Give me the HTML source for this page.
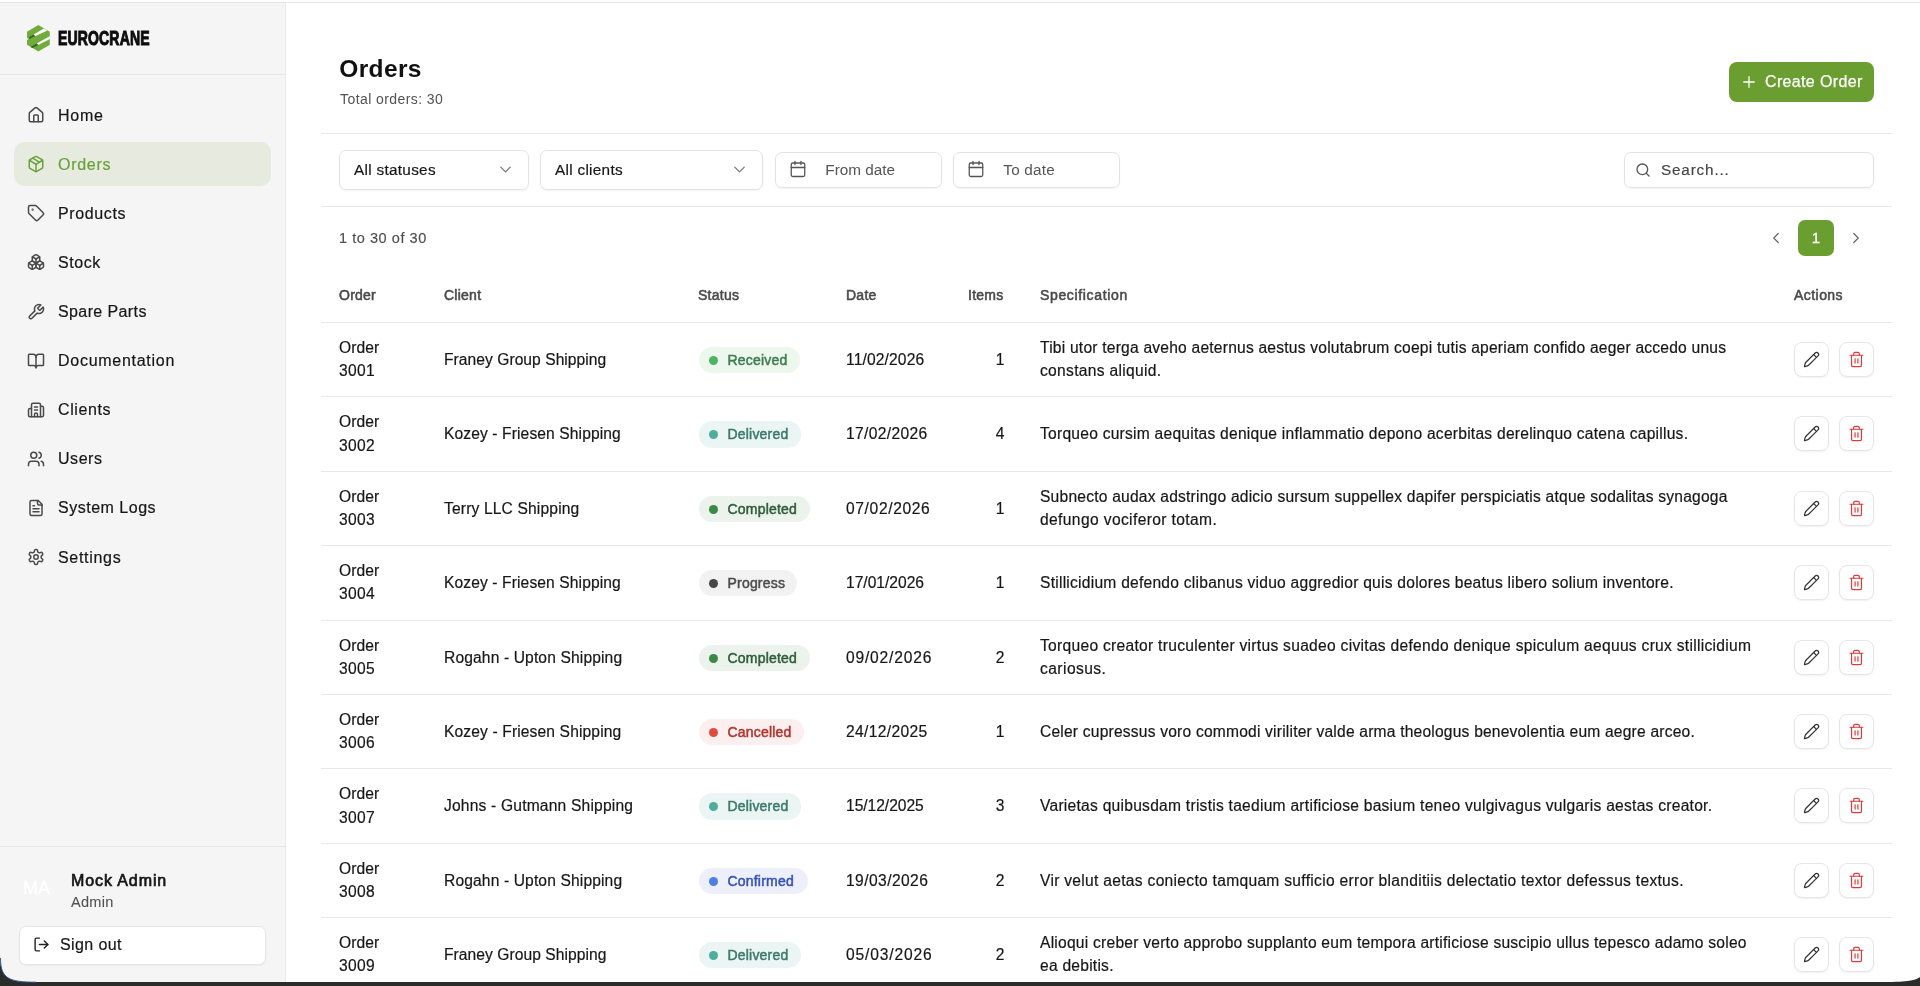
<!DOCTYPE html><html><head><meta charset="utf-8"><style>*{box-sizing:border-box;margin:0;padding:0}
html,body{width:1920px;height:986px;overflow:hidden;background:#fff;font-family:"Liberation Sans",sans-serif;color:#171717}
.abs{position:absolute}
svg.i{position:absolute;fill:none;stroke:currentColor;stroke-width:2;stroke-linecap:round;stroke-linejoin:round}
#topline{left:0;top:2px;width:1920px;height:1px;background:#e6e6e6}
#side{left:0;top:3px;width:286px;height:983px;background:#f5f5f5;border-right:1px solid #e9e9e9;will-change:transform}
#logo{position:absolute;left:27px;top:22px}
#logotxt{position:absolute;left:57.5px;top:19.5px;font-size:20.8px;font-weight:bold;color:#0d0d0d;transform:scaleX(0.675);transform-origin:0 0;-webkit-text-stroke:1.1px #0d0d0d;letter-spacing:0.2px;line-height:30px}
.nav{position:absolute;left:14px;width:257px;height:44px;border-radius:10px}
.nav .t{position:absolute;left:44px;top:0.8px;line-height:44px;font-size:16px;letter-spacing:0.55px;color:#171717;-webkit-text-stroke:0.2px currentColor}
.nav svg{left:12.8px;top:13.3px;width:18px;height:18px;color:#4a4a4a;stroke-width:2}
.nav.act{background:#e6eadf}
.nav.act .t{color:#6aa13a}
.nav.act svg{color:#6aa13a}
#avatar{left:23px;top:873px;font-size:18px;color:#fff;line-height:24px;-webkit-text-stroke:0.3px #fff}
#uname{left:71px;top:867px;font-size:16px;line-height:22px;color:#171717;letter-spacing:0.9px;-webkit-text-stroke:0.7px #171717}
#urole{left:71px;top:889px;font-size:14.5px;line-height:20px;color:#525252;letter-spacing:0.3px;-webkit-text-stroke:0.1px #525252}
#signout{left:19px;top:923px;width:247px;height:39px;background:#fff;border:1px solid #e6e6e6;border-radius:7px;box-shadow:0 1px 2px rgba(0,0,0,.05)}
#signout svg{left:13.3px;top:9.3px;width:17px;height:17px;color:#222}
#signout span{position:absolute;left:40px;top:6px;font-size:16px;line-height:24px;letter-spacing:0.4px;color:#171717;-webkit-text-stroke:0.2px #171717}
#main{left:286px;top:3px;width:1634px;height:983px;will-change:transform}
.hline{position:absolute;height:1px;background:#e8e8e8}
#title{left:53.3px;top:51px;font-size:24.5px;font-weight:bold;line-height:30px;color:#111;letter-spacing:0.35px}
#total{left:54px;top:87px;font-size:14px;line-height:18px;letter-spacing:0.42px;color:#525252}
#create{left:1443px;top:59px;width:145px;height:40px;background:#6b9e31;border-radius:8px;color:#fff}
#create svg{left:11px;top:11px;width:18px;height:18px;stroke-width:1.7}
#create span{position:absolute;left:36px;top:10px;font-size:16px;line-height:20px;letter-spacing:0.35px;-webkit-text-stroke:0.25px #fff}
.box{position:absolute;border:1px solid #e3e3e3;border-radius:7px;background:#fff;box-shadow:0 1px 2px rgba(0,0,0,.05)}
.sel span{position:absolute;left:14px;top:9px;font-size:15.3px;line-height:20px;letter-spacing:0.35px;color:#171717;-webkit-text-stroke:0.2px #171717}
.sel svg{right:13.5px;top:9.4px;width:19px;height:19px;color:#777;stroke-width:1.6}
.dt svg{left:12.7px;top:7.4px;width:18px;height:18px;color:#555;stroke-width:1.7}
.dt span{position:absolute;left:49.3px;top:7px;font-size:15.3px;line-height:20px;letter-spacing:0.25px;color:#555}
.srch svg{left:10px;top:9px;width:16px;height:16px;stroke-width:2}
.srch span{left:36px;letter-spacing:0.9px;color:#444;-webkit-text-stroke:0.15px #444}
#range{left:53px;top:226px;font-size:14.5px;line-height:18px;letter-spacing:0.55px;color:#4d4d4d;-webkit-text-stroke:0.15px #4d4d4d}
#pg{left:1512px;top:217px;width:36px;height:36px;background:#6b9e31;border-radius:7px;color:#fff}
#pg span{position:absolute;left:0;width:36px;text-align:center;top:9px;font-size:15px;line-height:18px;-webkit-text-stroke:0.3px #fff}
#pg svg{width:18px;height:18px;color:#666;stroke-width:1.6}
.cell{position:absolute;font-size:15.6px;line-height:23.3px;letter-spacing:0.5px;color:#171717;white-space:nowrap;-webkit-text-stroke:0.2px #171717}
.cell.two{top:13.0px}
.cell.one{top:25.0px}
.hd{position:absolute;font-size:14px;color:#4a4a4a;white-space:nowrap;letter-spacing:0.25px;line-height:20px;-webkit-text-stroke:0.55px #4a4a4a}
.badge{position:absolute;top:24px;height:26.3px;border-radius:13px;font-size:14px;line-height:26px;padding-left:29px;white-space:nowrap;letter-spacing:0.2px;-webkit-text-stroke:0.5px currentColor}
.badge i{position:absolute;left:10.5px;top:9px;width:9px;height:9px;border-radius:50%}
.btn{position:absolute;top:19px;width:35px;height:35px;border:1px solid #e6e6e6;border-radius:8px;background:#fff;box-shadow:0 1px 2px rgba(0,0,0,.06)}
.btn svg{left:8px;top:8px;width:17px;height:17px;stroke-width:1.7;color:#333}
.btn.del svg{color:#dc3c3c}
#bottombar{left:0;top:982px;width:1920px;height:4px;background:#2b2b2b}

#corners{position:absolute;left:0;top:0;width:1920px;height:986px;pointer-events:none}
</style></head><body>
<div id="topline" class="abs"></div>
<div id="side" class="abs">
<svg id="logo" width="30" height="33" viewBox="0 0 30 33"><g transform="translate(-3,-3)"><polygon points="14.4,3 25.8,9.7 25.8,22.8 14.4,29.5 3,22.8 3,9.7" fill="#71ab3b"/><polygon points="9.7,12.4 19.75,6.4 23.4,8.4 11,14.3" fill="#fafafa"/><polygon points="3,16.4 9.7,12.4 11,14.3 3,18.1" fill="#2c6a20"/><polygon points="3,16.4 4.6,15.45 4.6,17.35 3,18.1" fill="#f7f7f7"/><polygon points="12.7,21.4 26,14.0 26,17.0 14.1,23.1" fill="#fafafa"/><polygon points="6.5,24.9 12.7,21.4 14.1,23.1 8.44,26.0" fill="#2c6a20"/></g></svg><div id="logotxt">EUROCRANE</div>

<div class="hline" style="left:0;top:71px;width:285px;background:#e6e6e6"></div>
<div class="nav" style="top:89.9px"><svg class="i" viewBox="0 0 24 24" style=""><path d="M15 21v-8a1 1 0 0 0-1-1h-4a1 1 0 0 0-1 1v8"/><path d="M3 10a2 2 0 0 1 .709-1.528l7-5.999a2 2 0 0 1 2.582 0l7 5.999A2 2 0 0 1 21 10v9a2 2 0 0 1-2 2H5a2 2 0 0 1-2-2z"/></svg><div class="t"><span id="n0" style="letter-spacing:0.751px">Home</span></div></div>
<div class="nav act" style="top:139.0px"><svg class="i" viewBox="0 0 24 24" style=""><path d="M11 21.73a2 2 0 0 0 2 0l7-4A2 2 0 0 0 21 16V8a2 2 0 0 0-1-1.73l-7-4a2 2 0 0 0-2 0l-7 4A2 2 0 0 0 3 8v8a2 2 0 0 0 1 1.73z"/><path d="M12 22V12"/><path d="m3.3 7 7.703 4.734a2 2 0 0 0 1.994 0L20.7 7"/><path d="m7.5 4.27 9 5.15"/></svg><div class="t"><span id="n1" style="letter-spacing:0.71px">Orders</span></div></div>
<div class="nav" style="top:188.1px"><svg class="i" viewBox="0 0 24 24" style=""><path d="M12.586 2.586A2 2 0 0 0 11.172 2H4a2 2 0 0 0-2 2v7.172a2 2 0 0 0 .586 1.414l8.704 8.704a2.426 2.426 0 0 0 3.42 0l6.58-6.58a2.426 2.426 0 0 0 0-3.42z"/><circle cx="7.5" cy="7.5" r=".5" fill="currentColor"/></svg><div class="t"><span id="n2" style="letter-spacing:0.621px">Products</span></div></div>
<div class="nav" style="top:237.2px"><svg class="i" viewBox="0 0 24 24" style=""><path d="M2.97 12.92A2 2 0 0 0 2 14.63v3.24a2 2 0 0 0 .97 1.71l3 1.8a2 2 0 0 0 2.06 0L12 19v-5.5l-5-3-4.03 2.42Z"/><path d="m7 16.5-4.74-2.85"/><path d="m7 16.5 5-3"/><path d="M7 16.5v5.17"/><path d="M12 13.5V19l3.970 2.38a2 2 0 0 0 2.06 0l3-1.8a2 2 0 0 0 .97-1.71v-3.24a2 2 0 0 0-.97-1.71L17 10.5l-5 3Z"/><path d="m17 16.5-5-3"/><path d="m17 16.5 4.74-2.85"/><path d="M17 16.5v5.17"/><path d="M7.97 4.42A2 2 0 0 0 7 6.13v4.37l5 3 5-3V6.13a2 2 0 0 0-.97-1.71l-3-1.8a2 2 0 0 0-2.06 0l-3 1.8Z"/><path d="M12 8 7.26 5.15"/><path d="m12 8 4.74-2.85"/><path d="M12 13.5V8"/></svg><div class="t"><span id="n3" style="letter-spacing:0.575px">Stock</span></div></div>
<div class="nav" style="top:286.3px"><svg class="i" viewBox="0 0 24 24" style=""><path d="M14.7 6.3a1 1 0 0 0 0 1.4l1.6 1.6a1 1 0 0 0 1.4 0l3.77-3.77a6 6 0 0 1-7.940 7.940l-6.910 6.910a2.12 2.12 0 0 1-3-3l6.910-6.910a6 6 0 0 1 7.940-7.940l-3.760 3.760z"/></svg><div class="t"><span id="n4" style="letter-spacing:0.39px">Spare Parts</span></div></div>
<div class="nav" style="top:335.4px"><svg class="i" viewBox="0 0 24 24" style=""><path d="M12 7v14"/><path d="M3 18a1 1 0 0 1-1-1V4a1 1 0 0 1 1-1h5a4 4 0 0 1 4 4 4 4 0 0 1 4-4h5a1 1 0 0 1 1 1v13a1 1 0 0 1-1 1h-6a3 3 0 0 0-3 3 3 3 0 0 0-3-3z"/></svg><div class="t"><span id="n5" style="letter-spacing:0.725px">Documentation</span></div></div>
<div class="nav" style="top:384.5px"><svg class="i" viewBox="0 0 24 24" style=""><path d="M10 12h4"/><path d="M10 8h4"/><path d="M14 21v-3a2 2 0 0 0-4 0v3"/><path d="M6 10H4a2 2 0 0 0-2 2v7a2 2 0 0 0 2 2h16a2 2 0 0 0 2-2V9a2 2 0 0 0-2-2h-2"/><path d="M6 21V5a2 2 0 0 1 2-2h8a2 2 0 0 1 2 2v16"/></svg><div class="t"><span id="n6" style="letter-spacing:0.617px">Clients</span></div></div>
<div class="nav" style="top:433.6px"><svg class="i" viewBox="0 0 24 24" style=""><path d="M16 21v-2a4 4 0 0 0-4-4H6a4 4 0 0 0-4 4v2"/><circle cx="9" cy="7" r="4"/><path d="M22 21v-2a4 4 0 0 0-3-3.87"/><path d="M16 3.13a4 4 0 0 1 0 7.75"/></svg><div class="t"><span id="n7" style="letter-spacing:0.55px">Users</span></div></div>
<div class="nav" style="top:482.7px"><svg class="i" viewBox="0 0 24 24" style=""><path d="M15 2H6a2 2 0 0 0-2 2v16a2 2 0 0 0 2 2h12a2 2 0 0 0 2-2V7Z"/><path d="M14 2v4a2 2 0 0 0 2 2h4"/><path d="M10 9H8"/><path d="M16 13H8"/><path d="M16 17H8"/></svg><div class="t"><span id="n8" style="letter-spacing:0.51px">System Logs</span></div></div>
<div class="nav" style="top:531.8px"><svg class="i" viewBox="0 0 24 24" style=""><path d="M12.22 2h-.44a2 2 0 0 0-2 2v.18a2 2 0 0 1-1 1.73l-.43.25a2 2 0 0 1-2 0l-.15-.08a2 2 0 0 0-2.73.73l-.22.38a2 2 0 0 0 .73 2.730l.15.1a2 2 0 0 1 1 1.72v.51a2 2 0 0 1-1 1.74l-.15.09a2 2 0 0 0-.73 2.73l.22.38a2 2 0 0 0 2.73.73l.15-.08a2 2 0 0 1 2 0l.43.25a2 2 0 0 1 1 1.73V20a2 2 0 0 0 2 2h.44a2 2 0 0 0 2-2v-.18a2 2 0 0 1 1-1.73l.43-.25a2 2 0 0 1 2 0l.15.08a2 2 0 0 0 2.73-.73l.22-.39a2 2 0 0 0-.73-2.73l-.15-.08a2 2 0 0 1-1-1.74v-.5a2 2 0 0 1 1-1.74l.15-.09a2 2 0 0 0 .73-2.73l-.22-.38a2 2 0 0 0-2.73-.73l-.15.08a2 2 0 0 1-2 0l-.43-.25a2 2 0 0 1-1-1.73V4a2 2 0 0 0-2-2z"/><circle cx="12" cy="12" r="3"/></svg><div class="t"><span id="n9" style="letter-spacing:0.693px">Settings</span></div></div>
<div class="hline" style="left:0;top:843px;width:285px;background:#e6e6e6"></div>
<div class="abs" id="avatar">MA</div>
<div class="abs" id="uname">Mock Admin</div>
<div class="abs" id="urole">Admin</div>
<div class="abs" id="signout"><svg class="i" viewBox="0 0 24 24" style=""><path d="m16 17 5-5-5-5"/><path d="M21 12H9"/><path d="M9 21H5a2 2 0 0 1-2-2V5a2 2 0 0 1 2-2h4"/></svg><span>Sign out</span></div>
</div>
<div id="main" class="abs">
<div class="abs" id="title">Orders</div>
<div class="abs" id="total">Total orders: 30</div>
<div class="abs" id="create"><svg class="i" viewBox="0 0 24 24" style=""><path d="M5 12h14"/><path d="M12 5v14"/></svg><span>Create Order</span></div>
<div class="hline" style="left:35px;top:130px;width:1571px"></div>
<div class="box sel" style="left:53px;top:147px;width:190px;height:40px"><span id="f1" style="letter-spacing:0.305px">All statuses</span><svg class="i" viewBox="0 0 24 24" style=""><path d="m6 9 6 6 6-6"/></svg></div>
<div class="box sel" style="left:254px;top:147px;width:223px;height:40px"><span id="f2" style="letter-spacing:0.3px">All clients</span><svg class="i" viewBox="0 0 24 24" style=""><path d="m6 9 6 6 6-6"/></svg></div>
<div class="box dt" style="left:489px;top:149px;width:167px;height:36px"><svg class="i" viewBox="0 0 24 24" style=""><path d="M8 2v4"/><path d="M16 2v4"/><rect width="18" height="18" x="3" y="4" rx="2"/><path d="M3 10h18"/></svg><span id="f3" style="letter-spacing:0.014px">From date</span></div>
<div class="box dt" style="left:667px;top:149px;width:167px;height:36px"><svg class="i" viewBox="0 0 24 24" style=""><path d="M8 2v4"/><path d="M16 2v4"/><rect width="18" height="18" x="3" y="4" rx="2"/><path d="M3 10h18"/></svg><span id="f4" style="letter-spacing:0.216px">To date</span></div>
<div class="box dt srch" style="left:1338px;top:149px;width:250px;height:36px"><svg class="i" viewBox="0 0 24 24" style=""><circle cx="11" cy="11" r="8"/><path d="m21 21-4.3-4.3"/></svg><span id="f5" style="letter-spacing:0.825px">Search...</span></div>
<div class="hline" style="left:35px;top:203px;width:1571px"></div>
<div class="abs" id="range">1 to 30 of 30</div>
<div class="abs" id="pg"><svg class="i" viewBox="0 0 24 24" style="left:-30.8px;top:8.5px"><path d="m15 18-6-6 6-6"/></svg><span>1</span><svg class="i" viewBox="0 0 24 24" style="left:49.2px;top:8.5px"><path d="m9 18 6-6-6-6"/></svg></div>
<div class="hd" style="left:53px;top:282px;letter-spacing:0.25px">Order</div>
<div class="hd" style="left:158px;top:282px;letter-spacing:0.25px">Client</div>
<div class="hd" style="left:412px;top:282px;letter-spacing:0.25px">Status</div>
<div class="hd" style="left:560px;top:282px;letter-spacing:0.25px">Date</div>
<div class="hd" style="left:682px;top:282px;letter-spacing:0.25px">Items</div>
<div class="hd" style="left:754px;top:282px;letter-spacing:0.65px">Specification</div>
<div class="hd" style="left:1508px;top:282px;letter-spacing:0.45px">Actions</div>
<div class="hline" style="left:35px;top:319px;width:1571px"></div>
<div class="row abs" style="left:0;top:320.00px;width:1634px;height:73.40px">
<div class="cell two" style="left:53px"><span id="o0a" style="letter-spacing:0.1px">Order</span><br><span id="o0b" style="letter-spacing:0.368px">3001</span></div>
<div class="cell one" style="left:158px"><span id="c0" style="letter-spacing:0.05px">Franey Group Shipping</span></div>
<div class="badge" style="left:412.5px;color:#3e7c52;background:#edf7ee;width:101px"><i style="background:#4cb563"></i>Received</div>
<div class="cell one" style="left:560px"><span id="d0" style="letter-spacing:0.143px">11/02/2026</span></div>
<div class="cell one" style="left:660px;width:59px;text-align:right">1</div>
<div class="cell two" style="left:754px"><span id="s0a" style="letter-spacing:0.215px">Tibi utor terga aveho aeternus aestus volutabrum coepi tutis aperiam confido aeger accedo unus</span><br><span id="s0b" style="letter-spacing:0.303px">constans aliquid.</span></div>
<div class="btn" style="left:1508px"><svg class="i" viewBox="0 0 24 24" style=""><path d="M21.174 6.812a1 1 0 0 0-3.986-3.987L3.842 16.174a2 2 0 0 0-.5.83l-1.321 4.352a.5.5 0 0 0 .623.622l4.353-1.32a2 2 0 0 0 .83-.497z"/><path d="m15 5 4 4"/></svg></div>
<div class="btn del" style="left:1553px"><svg class="i" viewBox="0 0 24 24" style=""><path d="M3 6h18"/><path d="M19 6v14c0 1-1 2-2 2H7c-1 0-2-1-2-2V6"/><path d="M8 6V4c0-1 1-2 2-2h4c1 0 2 1 2 2v2"/><line x1="10" x2="10" y1="11" y2="17"/><line x1="14" x2="14" y1="11" y2="17"/></svg></div>
</div>
<div class="hline" style="left:35px;top:393.40px;width:1571px"></div>
<div class="row abs" style="left:0;top:394.40px;width:1634px;height:73.40px">
<div class="cell two" style="left:53px"><span id="o1a" style="letter-spacing:0.1px">Order</span><br><span id="o1b" style="letter-spacing:0.368px">3002</span></div>
<div class="cell one" style="left:158px"><span id="c1" style="letter-spacing:0.112px">Kozey - Friesen Shipping</span></div>
<div class="badge" style="left:412.5px;color:#3c7a6c;background:#ebf5f3;width:102px"><i style="background:#4fae9a"></i>Delivered</div>
<div class="cell one" style="left:560px"><span id="d1" style="letter-spacing:0.342px">17/02/2026</span></div>
<div class="cell one" style="left:660px;width:59px;text-align:right">4</div>
<div class="cell one" style="left:754px"><span id="s1a" style="letter-spacing:0.244px">Torqueo cursim aequitas denique inflammatio depono acerbitas derelinquo catena capillus.</span></div>
<div class="btn" style="left:1508px"><svg class="i" viewBox="0 0 24 24" style=""><path d="M21.174 6.812a1 1 0 0 0-3.986-3.987L3.842 16.174a2 2 0 0 0-.5.83l-1.321 4.352a.5.5 0 0 0 .623.622l4.353-1.32a2 2 0 0 0 .83-.497z"/><path d="m15 5 4 4"/></svg></div>
<div class="btn del" style="left:1553px"><svg class="i" viewBox="0 0 24 24" style=""><path d="M3 6h18"/><path d="M19 6v14c0 1-1 2-2 2H7c-1 0-2-1-2-2V6"/><path d="M8 6V4c0-1 1-2 2-2h4c1 0 2 1 2 2v2"/><line x1="10" x2="10" y1="11" y2="17"/><line x1="14" x2="14" y1="11" y2="17"/></svg></div>
</div>
<div class="hline" style="left:35px;top:467.80px;width:1571px"></div>
<div class="row abs" style="left:0;top:468.80px;width:1634px;height:73.40px">
<div class="cell two" style="left:53px"><span id="o2a" style="letter-spacing:0.1px">Order</span><br><span id="o2b" style="letter-spacing:0.368px">3003</span></div>
<div class="cell one" style="left:158px"><span id="c2" style="letter-spacing:0.155px">Terry LLC Shipping</span></div>
<div class="badge" style="left:412.5px;color:#2f5e3b;background:#ecf2ec;width:111px"><i style="background:#3a8a45"></i>Completed</div>
<div class="cell one" style="left:560px"><span id="d2" style="letter-spacing:0.635px">07/02/2026</span></div>
<div class="cell one" style="left:660px;width:59px;text-align:right">1</div>
<div class="cell two" style="left:754px"><span id="s2a" style="letter-spacing:0.214px">Subnecto audax adstringo adicio sursum suppellex dapifer perspiciatis atque sodalitas synagoga</span><br><span id="s2b" style="letter-spacing:0.376px">defungo vociferor totam.</span></div>
<div class="btn" style="left:1508px"><svg class="i" viewBox="0 0 24 24" style=""><path d="M21.174 6.812a1 1 0 0 0-3.986-3.987L3.842 16.174a2 2 0 0 0-.5.83l-1.321 4.352a.5.5 0 0 0 .623.622l4.353-1.32a2 2 0 0 0 .83-.497z"/><path d="m15 5 4 4"/></svg></div>
<div class="btn del" style="left:1553px"><svg class="i" viewBox="0 0 24 24" style=""><path d="M3 6h18"/><path d="M19 6v14c0 1-1 2-2 2H7c-1 0-2-1-2-2V6"/><path d="M8 6V4c0-1 1-2 2-2h4c1 0 2 1 2 2v2"/><line x1="10" x2="10" y1="11" y2="17"/><line x1="14" x2="14" y1="11" y2="17"/></svg></div>
</div>
<div class="hline" style="left:35px;top:542.20px;width:1571px"></div>
<div class="row abs" style="left:0;top:543.20px;width:1634px;height:73.40px">
<div class="cell two" style="left:53px"><span id="o3a" style="letter-spacing:0.1px">Order</span><br><span id="o3b" style="letter-spacing:0.368px">3004</span></div>
<div class="cell one" style="left:158px"><span id="c3" style="letter-spacing:0.112px">Kozey - Friesen Shipping</span></div>
<div class="badge" style="left:412.5px;color:#4d4d4d;background:#f2f2f2;width:98px"><i style="background:#474747"></i>Progress</div>
<div class="cell one" style="left:560px"><span id="d3" style="letter-spacing:-0.009px">17/01/2026</span></div>
<div class="cell one" style="left:660px;width:59px;text-align:right">1</div>
<div class="cell one" style="left:754px"><span id="s3a" style="letter-spacing:0.242px">Stillicidium defendo clibanus viduo aggredior quis dolores beatus libero solium inventore.</span></div>
<div class="btn" style="left:1508px"><svg class="i" viewBox="0 0 24 24" style=""><path d="M21.174 6.812a1 1 0 0 0-3.986-3.987L3.842 16.174a2 2 0 0 0-.5.83l-1.321 4.352a.5.5 0 0 0 .623.622l4.353-1.32a2 2 0 0 0 .83-.497z"/><path d="m15 5 4 4"/></svg></div>
<div class="btn del" style="left:1553px"><svg class="i" viewBox="0 0 24 24" style=""><path d="M3 6h18"/><path d="M19 6v14c0 1-1 2-2 2H7c-1 0-2-1-2-2V6"/><path d="M8 6V4c0-1 1-2 2-2h4c1 0 2 1 2 2v2"/><line x1="10" x2="10" y1="11" y2="17"/><line x1="14" x2="14" y1="11" y2="17"/></svg></div>
</div>
<div class="hline" style="left:35px;top:616.60px;width:1571px"></div>
<div class="row abs" style="left:0;top:617.60px;width:1634px;height:73.40px">
<div class="cell two" style="left:53px"><span id="o4a" style="letter-spacing:0.1px">Order</span><br><span id="o4b" style="letter-spacing:0.368px">3005</span></div>
<div class="cell one" style="left:158px"><span id="c4" style="letter-spacing:0.135px">Rogahn - Upton Shipping</span></div>
<div class="badge" style="left:412.5px;color:#2f5e3b;background:#ecf2ec;width:111px"><i style="background:#3a8a45"></i>Completed</div>
<div class="cell one" style="left:560px"><span id="d4" style="letter-spacing:0.81px">09/02/2026</span></div>
<div class="cell one" style="left:660px;width:59px;text-align:right">2</div>
<div class="cell two" style="left:754px"><span id="s4a" style="letter-spacing:0.285px">Torqueo creator truculenter virtus suadeo civitas defendo denique spiculum aequus crux stillicidium</span><br><span id="s4b" style="letter-spacing:0.438px">cariosus.</span></div>
<div class="btn" style="left:1508px"><svg class="i" viewBox="0 0 24 24" style=""><path d="M21.174 6.812a1 1 0 0 0-3.986-3.987L3.842 16.174a2 2 0 0 0-.5.83l-1.321 4.352a.5.5 0 0 0 .623.622l4.353-1.32a2 2 0 0 0 .83-.497z"/><path d="m15 5 4 4"/></svg></div>
<div class="btn del" style="left:1553px"><svg class="i" viewBox="0 0 24 24" style=""><path d="M3 6h18"/><path d="M19 6v14c0 1-1 2-2 2H7c-1 0-2-1-2-2V6"/><path d="M8 6V4c0-1 1-2 2-2h4c1 0 2 1 2 2v2"/><line x1="10" x2="10" y1="11" y2="17"/><line x1="14" x2="14" y1="11" y2="17"/></svg></div>
</div>
<div class="hline" style="left:35px;top:691.00px;width:1571px"></div>
<div class="row abs" style="left:0;top:692.00px;width:1634px;height:73.40px">
<div class="cell two" style="left:53px"><span id="o5a" style="letter-spacing:0.1px">Order</span><br><span id="o5b" style="letter-spacing:0.368px">3006</span></div>
<div class="cell one" style="left:158px"><span id="c5" style="letter-spacing:0.131px">Kozey - Friesen Shipping</span></div>
<div class="badge" style="left:412.5px;color:#b3332e;background:#fcefef;width:105px"><i style="background:#e24a3f"></i>Cancelled</div>
<div class="cell one" style="left:560px"><span id="d5" style="letter-spacing:0.354px">24/12/2025</span></div>
<div class="cell one" style="left:660px;width:59px;text-align:right">1</div>
<div class="cell one" style="left:754px"><span id="s5a" style="letter-spacing:0.201px">Celer cupressus voro commodi viriliter valde arma theologus benevolentia eum aegre arceo.</span></div>
<div class="btn" style="left:1508px"><svg class="i" viewBox="0 0 24 24" style=""><path d="M21.174 6.812a1 1 0 0 0-3.986-3.987L3.842 16.174a2 2 0 0 0-.5.83l-1.321 4.352a.5.5 0 0 0 .623.622l4.353-1.32a2 2 0 0 0 .83-.497z"/><path d="m15 5 4 4"/></svg></div>
<div class="btn del" style="left:1553px"><svg class="i" viewBox="0 0 24 24" style=""><path d="M3 6h18"/><path d="M19 6v14c0 1-1 2-2 2H7c-1 0-2-1-2-2V6"/><path d="M8 6V4c0-1 1-2 2-2h4c1 0 2 1 2 2v2"/><line x1="10" x2="10" y1="11" y2="17"/><line x1="14" x2="14" y1="11" y2="17"/></svg></div>
</div>
<div class="hline" style="left:35px;top:765.40px;width:1571px"></div>
<div class="row abs" style="left:0;top:766.40px;width:1634px;height:73.40px">
<div class="cell two" style="left:53px"><span id="o6a" style="letter-spacing:0.1px">Order</span><br><span id="o6b" style="letter-spacing:0.368px">3007</span></div>
<div class="cell one" style="left:158px"><span id="c6" style="letter-spacing:0.187px">Johns - Gutmann Shipping</span></div>
<div class="badge" style="left:412.5px;color:#3c7a6c;background:#ebf5f3;width:102px"><i style="background:#4fae9a"></i>Delivered</div>
<div class="cell one" style="left:560px"><span id="d6" style="letter-spacing:-0.031px">15/12/2025</span></div>
<div class="cell one" style="left:660px;width:59px;text-align:right">3</div>
<div class="cell one" style="left:754px"><span id="s6a" style="letter-spacing:0.255px">Varietas quibusdam tristis taedium artificiose basium teneo vulgivagus vulgaris aestas creator.</span></div>
<div class="btn" style="left:1508px"><svg class="i" viewBox="0 0 24 24" style=""><path d="M21.174 6.812a1 1 0 0 0-3.986-3.987L3.842 16.174a2 2 0 0 0-.5.83l-1.321 4.352a.5.5 0 0 0 .623.622l4.353-1.32a2 2 0 0 0 .83-.497z"/><path d="m15 5 4 4"/></svg></div>
<div class="btn del" style="left:1553px"><svg class="i" viewBox="0 0 24 24" style=""><path d="M3 6h18"/><path d="M19 6v14c0 1-1 2-2 2H7c-1 0-2-1-2-2V6"/><path d="M8 6V4c0-1 1-2 2-2h4c1 0 2 1 2 2v2"/><line x1="10" x2="10" y1="11" y2="17"/><line x1="14" x2="14" y1="11" y2="17"/></svg></div>
</div>
<div class="hline" style="left:35px;top:839.80px;width:1571px"></div>
<div class="row abs" style="left:0;top:840.80px;width:1634px;height:73.40px">
<div class="cell two" style="left:53px"><span id="o7a" style="letter-spacing:0.1px">Order</span><br><span id="o7b" style="letter-spacing:0.368px">3008</span></div>
<div class="cell one" style="left:158px"><span id="c7" style="letter-spacing:0.135px">Rogahn - Upton Shipping</span></div>
<div class="badge" style="left:412.5px;color:#3652b8;background:#edf0fb;width:109px"><i style="background:#4a7fe6"></i>Confirmed</div>
<div class="cell one" style="left:560px"><span id="d7" style="letter-spacing:0.424px">19/03/2026</span></div>
<div class="cell one" style="left:660px;width:59px;text-align:right">2</div>
<div class="cell one" style="left:754px"><span id="s7a" style="letter-spacing:0.293px">Vir velut aetas coniecto tamquam sufficio error blanditiis delectatio textor defessus textus.</span></div>
<div class="btn" style="left:1508px"><svg class="i" viewBox="0 0 24 24" style=""><path d="M21.174 6.812a1 1 0 0 0-3.986-3.987L3.842 16.174a2 2 0 0 0-.5.83l-1.321 4.352a.5.5 0 0 0 .623.622l4.353-1.32a2 2 0 0 0 .83-.497z"/><path d="m15 5 4 4"/></svg></div>
<div class="btn del" style="left:1553px"><svg class="i" viewBox="0 0 24 24" style=""><path d="M3 6h18"/><path d="M19 6v14c0 1-1 2-2 2H7c-1 0-2-1-2-2V6"/><path d="M8 6V4c0-1 1-2 2-2h4c1 0 2 1 2 2v2"/><line x1="10" x2="10" y1="11" y2="17"/><line x1="14" x2="14" y1="11" y2="17"/></svg></div>
</div>
<div class="hline" style="left:35px;top:914.20px;width:1571px"></div>
<div class="row abs" style="left:0;top:915.20px;width:1634px;height:73.40px">
<div class="cell two" style="left:53px"><span id="o8a" style="letter-spacing:0.1px">Order</span><br><span id="o8b" style="letter-spacing:0.368px">3009</span></div>
<div class="cell one" style="left:158px"><span id="c8" style="letter-spacing:0.055px">Franey Group Shipping</span></div>
<div class="badge" style="left:412.5px;color:#3c7a6c;background:#ebf5f3;width:102px"><i style="background:#4fae9a"></i>Delivered</div>
<div class="cell one" style="left:560px"><span id="d8" style="letter-spacing:0.846px">05/03/2026</span></div>
<div class="cell one" style="left:660px;width:59px;text-align:right">2</div>
<div class="cell two" style="left:754px"><span id="s8a" style="letter-spacing:0.235px">Alioqui creber verto approbo supplanto eum tempora artificiose suscipio ullus tepesco adamo soleo</span><br><span id="s8b" style="letter-spacing:0.24px">ea debitis.</span></div>
<div class="btn" style="left:1508px"><svg class="i" viewBox="0 0 24 24" style=""><path d="M21.174 6.812a1 1 0 0 0-3.986-3.987L3.842 16.174a2 2 0 0 0-.5.83l-1.321 4.352a.5.5 0 0 0 .623.622l4.353-1.32a2 2 0 0 0 .83-.497z"/><path d="m15 5 4 4"/></svg></div>
<div class="btn del" style="left:1553px"><svg class="i" viewBox="0 0 24 24" style=""><path d="M3 6h18"/><path d="M19 6v14c0 1-1 2-2 2H7c-1 0-2-1-2-2V6"/><path d="M8 6V4c0-1 1-2 2-2h4c1 0 2 1 2 2v2"/><line x1="10" x2="10" y1="11" y2="17"/><line x1="14" x2="14" y1="11" y2="17"/></svg></div>
</div>
<div class="hline" style="left:35px;top:988.60px;width:1571px"></div>
</div>
<div class="abs" id="bottombar"></div>
<svg id="corners" viewBox="0 0 1920 986"><path d="M0,955 C0,979 9,982.5 38,982.5 L38,986 L0,986 Z" fill="#2b2b2b"/><path d="M0.5,958 C0.5,979 9,982 36,982.2" fill="none" stroke="#35598f" stroke-width="1"/><path d="M1880,982 C1905,982 1915,981 1920,977 L1920,986 L1880,986 Z" fill="#2b2b2b"/></svg>
</body></html>
